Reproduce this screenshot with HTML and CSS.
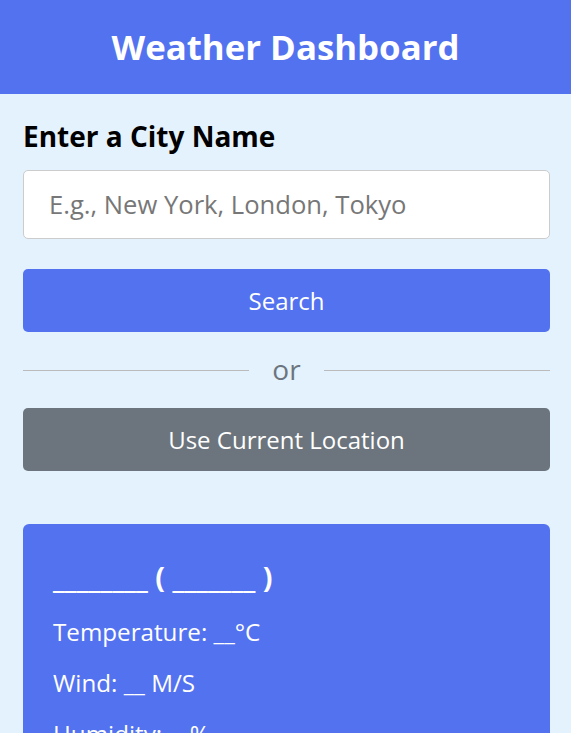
FILE: index.html
```html
<!DOCTYPE html>
<html lang="en">
<head>
<meta charset="utf-8">
<title>Weather Dashboard</title>
<link rel="stylesheet" href="styles.css">
</head>
<body>
<h1 class="title">Weather Dashboard</h1>
<div class="container">
  <div class="weather-input">
    <h3 class="label">Enter a City Name</h3>
    <input class="city-input" type="text" placeholder="E.g., New York, London, Tokyo">
    <button class="btn search-btn">Search</button>
    <div class="separator"><span class="sep-text">or</span></div>
    <button class="btn location-btn">Use Current Location</button>
  </div>
  <div class="weather-data">
    <div class="current-weather">
      <h2 class="city">________ ( _______ )</h2>
      <p class="stat">Temperature: __°C</p>
      <p class="stat">Wind: __ M/S</p>
      <p class="stat">Humidity: __%</p>
    </div>
  </div>
</div>
</body>
</html>
```
FILE: styles.css
```css
* { box-sizing: border-box; margin: 0; padding: 0; }
html, body { background: #E3F2FD; }
body { font-family: "Open Sans", "Noto Sans", sans-serif; }
.title {
  background: #5372F0;
  color: #fff;
  text-align: center;
  font-size: 34.8px;
  font-weight: 700;
  height: 94px;
  line-height: 94px;
}
.container { padding: 25px 21px 0 23px; }
.label { font-size: 28px; font-weight: 700; color: #000; line-height: 35px; }
.city-input {
  display: block;
  width: 100%;
  height: 69px;
  margin: 16px 0 30px;
  padding: 0 25px;
  border: 1px solid #ccc;
  border-radius: 5px;
  background: #fff;
  font-family: inherit;
  font-size: 25.6px;
  color: #333;
  outline: none;
}
.city-input::placeholder { color: #777; }
.btn {
  display: block;
  width: 100%;
  height: 63px;
  border: none;
  border-radius: 5px;
  color: #fff;
  font-family: inherit;
  font-size: 24px;
}
.search-btn { background: #5372F0; }
.location-btn { background: #6C757D; }
.separator {
  height: 1px;
  background: #BBBBBB;
  margin: 38px 0 37px;
  display: flex;
  align-items: center;
  justify-content: center;
}
.sep-text {
  background: #E3F2FD;
  color: #6C757D;
  font-size: 28px;
  padding: 0 23px;
  margin-top: -4px;
  line-height: 1;
}
.weather-data { margin-top: 53px; }
.current-weather {
  background: #5372F0;
  color: #fff;
  border-radius: 6px;
  padding: 34px 30px 30px;
}
.city { font-size: 28.8px; font-weight: 700; line-height: 38px; margin-bottom: 20px; }
.stat { font-size: 24.2px; line-height: 32px; margin-bottom: 19px; }
```
